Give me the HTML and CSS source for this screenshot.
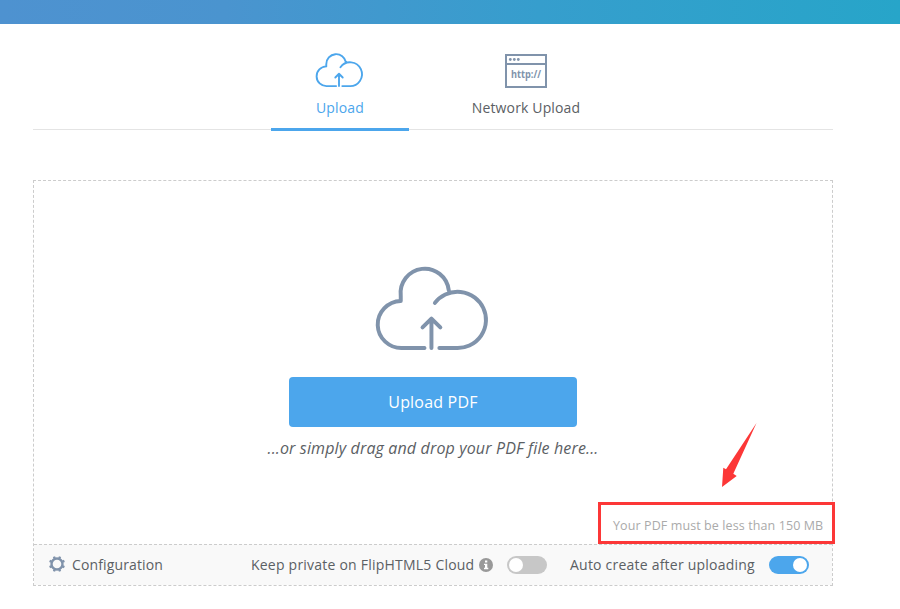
FILE: index.html
```html
<!DOCTYPE html>
<html lang="en">
<head>
<meta charset="utf-8">
<title>Upload PDF</title>
<link rel="stylesheet" href="styles.css">
</head>
<body>
<svg width="0" height="0" class="defs">
  <symbol id="cloud" viewBox="0 0 112 84" overflow="visible">
    <path d="M49 80H26A24 24 0 0 1 25 32V26.500A24.200 24.200 0 0 1 73 22M59.500 34A29 29 0 1 1 81 80H64M56 80V50M47 59L56 50L65 59"/>
  </symbol>
</svg>
<header class="topbar"></header>
<main class="page">
  <nav class="tabs">
    <a class="tab active"><svg class="cloud-small"><use href="#cloud"/></svg><span class="t-upload">Upload</span></a>
    <a class="tab">
      <svg class="browser" viewBox="0 0 42 34"><path d="M1 1H41V33H1ZM1 10H41"/><g><circle cx="5.300" cy="5.500" r="1.400"/><circle cx="9.300" cy="5.500" r="1.400"/><circle cx="13.300" cy="5.500" r="1.400"/></g><text x="6" y="24" textLength="30" lengthAdjust="spacingAndGlyphs">http://</text></svg>
      <span class="t-network">Network Upload</span></a>
  </nav>
  <section class="dropzone">
    <div class="drop">
      <svg class="cloud-large" viewBox="0 0 112 84"><path d="M49 80H26.500A24 24 0 0 1 25 32V27A24 24.500 0 0 1 73.500 21M59.500 34A28.700 28.700 0 1 1 81 80H64M56 80V50M47 59L56 50L65 59" class="cloud-line"/></svg>
      <button class="upload"><span>Upload PDF</span></button>
      <p class="hint">...or simply drag and drop your PDF file here...</p>
      <div class="limit"><span>Your PDF must be less than 150 MB</span>
        <svg class="arrow" viewBox="0 0 46 66"><path d="M45.500 -1L22.300 49.700L25.700 52L11 63L12.300 43.700L15 45.300Z"/></svg>
      </div>
    </div>
    <footer class="options">
      <svg class="gear" viewBox="-8 -8 16 16"><circle r="5.500"/><g transform="rotate(22.500)"><path d="M0 -8V-5M0 5V8M-8 0H-5M5 0H8"/></g><g transform="rotate(67.500)"><path d="M0 -8V-5M0 5V8M-8 0H-5M5 0H8"/></g></svg>
      <span class="t-config">Configuration</span>
      <span class="t-private">Keep private on FlipHTML5 Cloud</span>
      <svg class="info" viewBox="0 0 14 14"><circle cx="7" cy="7" r="7"/><path d="M6 2.500H8.300V4.500H6ZM5 5.700H8.300V9.700H9.300V11.200H5V9.700H6V7H5Z"/></svg>
      <span class="switch"></span>
      <span class="t-auto">Auto create after uploading</span>
      <span class="switch on"></span>
    </footer>
  </section>
</main>
</body>
</html>
```
FILE: styles.css
```css
* { box-sizing: border-box; }
body { margin: 0; background: #fff; color: #5b6064; font: 15px/20px "Open Sans", "Noto Sans", sans-serif; height: 609px; overflow: hidden; }
svg { display: block; flex: none; overflow: visible; }
.defs { position: absolute; }
.topbar { height: 24px; background: linear-gradient(90deg, #4e92d0, #4a94cf 25%, #369ecd 60%, #27a5c9); }
.page { width: 800px; margin-left: 33px; }
.tabs { height: 106px; display: flex; justify-content: center; gap: 48px; border-bottom: 1px solid #e4e4e4; }
.tab { width: 138px; height: 107px; padding-top: 29px; display: flex; flex-direction: column; align-items: center; white-space: nowrap; font-size: 14px; letter-spacing: 0.15px; }
.tab span { margin-top: 10px; }
.active { color: #4ca6ec; border-bottom: 3px solid #4ca6ec; }
.cloud-small, .cloud-large { fill: none; stroke: #8093ab; stroke-width: 4; stroke-linecap: round; stroke-linejoin: round; }
.cloud-small { width: 46px; height: 35px; margin-right: 2px; stroke: #4ca6ec; stroke-width: 4.6; }
.browser { width: 42px; height: 34px; margin: 1px 0 0; }
.browser path { fill: none; stroke: #8093ab; stroke-width: 2; }
.browser g, .browser text { fill: #8093ab; }
.browser text { font: 700 10px "Open Sans", sans-serif; letter-spacing: 0; }
.dropzone { margin-top: 50px; height: 406px; border: 1px dashed #ccc; }
.drop { height: 363px; padding-top: 87px; display: flex; flex-direction: column; align-items: center; }
.cloud-large { width: 112px; height: 84px; margin-right: 2px; }
.cloud-line { transform: translate(0, 1.6px) scale(0.99, 0.98); }
.upload { width: 288px; height: 50px; margin-top: 25px; padding: 0; border: 0; border-radius: 4px; background: #4ca6ec; color: #fff; font: 16px/50px "Open Sans", sans-serif; letter-spacing: 0.2px; }
.hint { margin: 10px 0 0; font-size: 16px; line-height: 22px; letter-spacing: 0.14px; font-style: italic; white-space: nowrap; }
.limit { position: relative; align-self: flex-end; flex: none; width: 237px; height: 42px; margin: 43px -3px 0 0; border: 3px solid #fc3737; color: #aaa; font-size: 12.5px; letter-spacing: 0.1px; line-height: 41px; padding-left: 12px; white-space: nowrap; }
.arrow { position: absolute; left: 110px; top: -81px; width: 46px; height: 66px; fill: #fc3737; }
.options { height: 41px; border-top: 1px dashed #ccc; background: #f9f9f9; display: flex; align-items: center; padding-left: 15px; white-space: nowrap; font-size: 14px; letter-spacing: 0.22px; }
.options span { flex: none; }
.gear { width: 16px; height: 16px; margin-right: 7px; margin-top: -2px; }
.gear circle, .gear path { fill: none; stroke: #8093ab; stroke-width: 2.4; }
.t-config { width: 179px; letter-spacing: 0.13px; }
.t-private { width: 228px; }
.info { width: 14px; height: 14px; fill: #999; }
.info path { fill: #fff; }
.switch { width: 40px; height: 18px; border-radius: 9px; background: #c7c7c7; padding: 2px; margin-left: 14px; }
.switch::before { content: ""; display: block; width: 14px; height: 14px; border-radius: 50%; background: #fff; }
.switch.on { background: #4ca6ec; margin-left: 0; }
.switch.on::before { margin-left: auto; }
.t-auto { width: 199px; margin-left: 23px; }
```
